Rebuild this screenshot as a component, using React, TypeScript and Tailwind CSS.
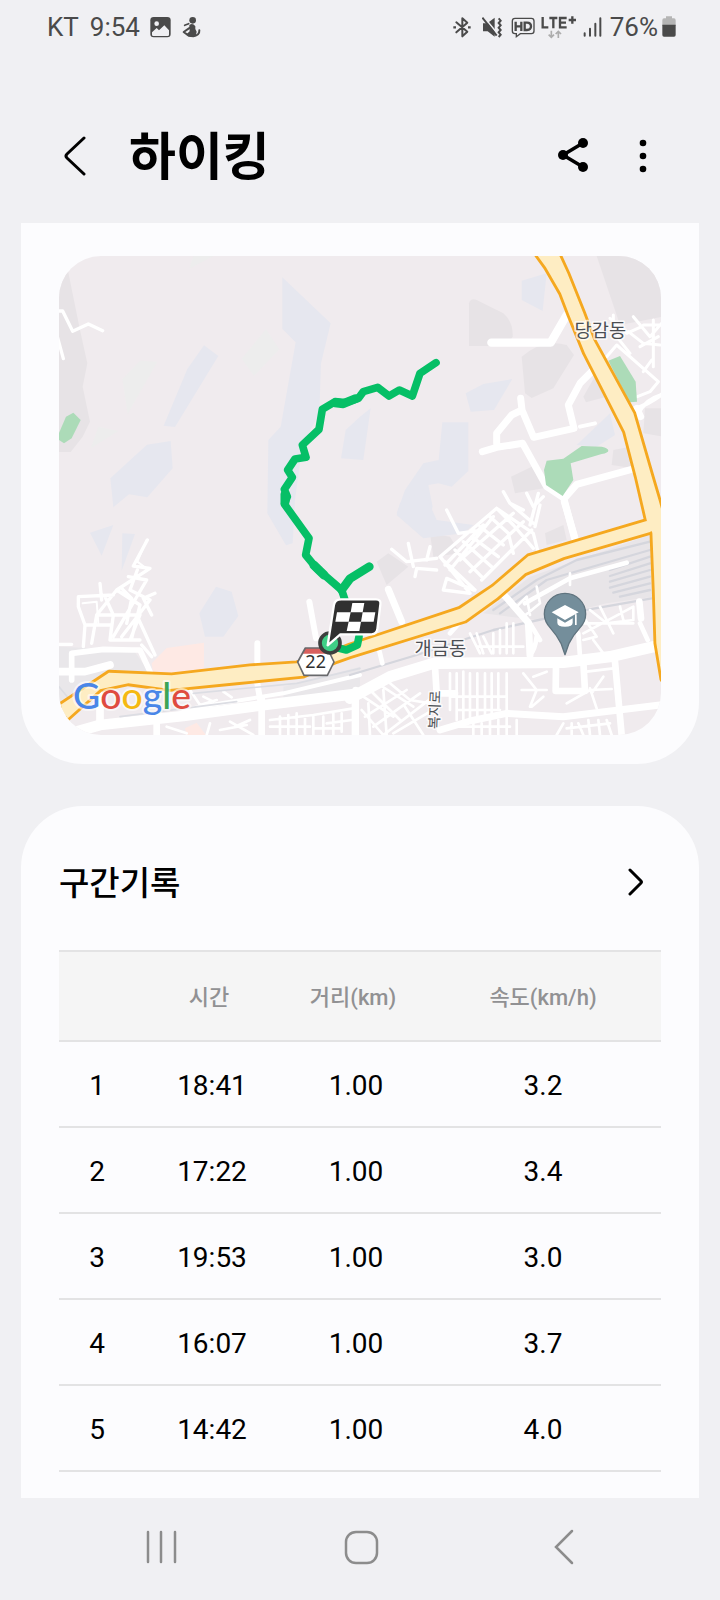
import React from 'react';

const SECTIONS = [
  { lap: 1, time: '18:41', distance: '1.00', speed: '3.2' },
  { lap: 2, time: '17:22', distance: '1.00', speed: '3.4' },
  { lap: 3, time: '19:53', distance: '1.00', speed: '3.0' },
  { lap: 4, time: '16:07', distance: '1.00', speed: '3.7' },
  { lap: 5, time: '14:42', distance: '1.00', speed: '4.0' },
];

const HIGHWAY_22 =
  'M-27 1375L3 1348L150 1250L338 1258L573 1231L713 1222L793 1200L873 1168L1203 1058L1303 991L1408 901L1538 862L1763 795L1790 815L1773 828L1513 904L1398 952L1313 1026L1218 1094L873 1201L833 1215L733 1259L533 1279L333 1299L208 1282L123 1300L28 1385L-27 1434Z';
const HIGHWAY_EAST =
  'M1422 -20L1461 34L1506 112L1531 177L1578 292L1698 527L1733 662L1765 800L1780 830L1787 1002L1792 1162L1810 1270L1840 1270L1840 777L1808 765L1798 730L1778 662L1723 472L1603 252L1573 172L1525 52L1492 -20Z';
const ROUTE =
  'M1131 320L1083 352L1060 420L1021 402L990 420L956 394L913 407L898 427L858 440L828 437L790 460L780 520L730 567L741 604L708 609L686 642L700 664L676 700L685 722L676 744L750 847L740 897L773 937L848 1002L863 1047';

function StatusBar() {
  return (
    <div className="flex h-[54px] items-center justify-between pl-[47px] pr-11 text-[26px] leading-8 text-[#4a4a4a]">
      <div className="flex items-center">
        <span>KT</span>
        <span className="ml-[11px]">9:54</span>
        <svg className="ml-[10px] h-[21px] w-[21px]" viewBox="0 0 63 63">
          <rect x="1" y="0" width="61" height="61" rx="10" fill="#4a4a4a" />
          <circle cx="20" cy="20" r="7" fill="#f0f0f3" />
          <path d="M6 46L20 33L27 40L43 25L57 40V53Q57 57 53 57H10Q6 57 6 53Z" fill="#f0f0f3" />
        </svg>
        <svg className="ml-[11px] h-[21px] w-[19px]" viewBox="0 0 57 63" fill="none" stroke="#4a4a4a">
          <circle cx="32" cy="10" r="10" fill="#4a4a4a" stroke="none" />
          <path d="M22 24Q32 16 40 28Q38 36 44 44L41 58Q24 62 12 53L23 43Z" fill="#4a4a4a" stroke="none" />
          <path d="M20 20L8 25" strokeWidth="5" strokeLinecap="round" />
          <path d="M24 32L5 45L20 56L34 58Q53 54 52 40" strokeWidth="6" strokeLinecap="round" strokeLinejoin="round" />
        </svg>
      </div>
      <div className="flex items-center">
        <svg className="h-[21px] w-[18px]" viewBox="0 0 54 63" fill="none" stroke="#4a4a4a" strokeWidth="6">
          <path d="M10 16L43 44L28 58V4L43 17L10 46" strokeLinejoin="round" strokeLinecap="round" />
          <path d="M1 31H9M45 31H53" strokeWidth="7" />
        </svg>
        <svg className="ml-[11px] h-[21px] w-5" viewBox="0 0 60 63" fill="none" stroke="#4a4a4a">
          <path d="M3 19H16L38 2V59L17 43H3Z" fill="#4a4a4a" stroke="none" />
          <path d="M4 -2L48 52" stroke="#f0f0f3" strokeWidth="5" />
          <path d="M1 2L44 56" strokeWidth="6" />
          <path d="M50 4L56 11L50 18L56 25L50 32L56 39L50 46L56 53L50 60" strokeWidth="6" />
        </svg>
        <svg className="ml-[9px] h-[21px] w-6" viewBox="0 0 72 63" fill="none" stroke="#4a4a4a" strokeWidth="4">
          <path d="M12 4H61Q69 4 69 12V42Q69 50 61 50H28L16 59V50H12Q4 50 4 42V12Q4 4 12 4Z" />
          <path d="M14 14V42M31 14V42M14 28H31M41 17V39H48Q60 39 60 28Q60 17 48 17Z" strokeWidth="7" />
        </svg>
        <svg className="ml-[6px] h-6 w-9" viewBox="0 0 108 72" fill="none" stroke="#4a4a4a" strokeWidth="7">
          <path d="M5 6V37H22M25 9H49M37 9V40M77 9H57V37H77M57 23H75M83 15H105M94 4V26" />
          <path d="M31 47V67M23 59L31 67L39 59M52 69V49M44 57L52 49L60 57" stroke="#adadad" strokeWidth="5" />
        </svg>
        <svg className="ml-[6px] h-[21px] w-[19px]" viewBox="0 0 57 63" stroke="#4a4a4a" strokeWidth="6" strokeLinecap="round">
          <path d="M5 49V56M21 35V56M37 20V56M52 4V56" />
        </svg>
        <span className="ml-2">76%</span>
        <svg className="ml-1 h-[22px] w-[14px]" viewBox="0 0 42 66">
          <path d="M12 1H30V7H36Q41 7 41 13V30H1V13Q1 7 6 7H12Z" fill="#b5b5b5" />
          <path d="M1 26H41V57Q41 62 36 62H6Q1 62 1 57Z" fill="#4a4a4a" />
        </svg>
      </div>
    </div>
  );
}

function Header() {
  return (
    <header className="flex items-center pb-[26px] pl-[55px] pr-[57px] pt-[60px]">
      <button type="button" aria-label="뒤로" className="flex h-12 w-10 items-center justify-center">
        <svg className="h-10 w-6" viewBox="0 0 24 40" fill="none" stroke="#000" strokeWidth="3" strokeLinecap="round" strokeLinejoin="round">
          <path d="M21 2L4 18Q2 20 4 22L21 38" />
        </svg>
      </button>
      <h1 className="ml-[34px] flex-1 pt-1 text-[51px] font-bold leading-[79px] text-black">하이킹</h1>
      <button type="button" aria-label="공유" className="flex h-12 w-12 items-center justify-center">
        <svg className="h-9 w-8" viewBox="0 0 32 36">
          <path d="M26 5L6 17L26 29" fill="none" stroke="#000" strokeWidth="3.5" />
          <circle cx="26" cy="5" r="5" />
          <circle cx="6" cy="17" r="5" />
          <circle cx="26" cy="29" r="5" />
        </svg>
      </button>
      <button type="button" aria-label="더보기" className="ml-[26px] flex h-12 w-10 items-center justify-center">
        <svg className="h-9 w-2" viewBox="0 0 8 36">
          <circle cx="4" cy="5" r="3.3" />
          <circle cx="4" cy="18" r="3.3" />
          <circle cx="4" cy="31" r="3.3" />
        </svg>
      </button>
    </header>
  );
}

function RouteMap() {
  return (
    <svg
      className="block w-full rounded-[42px]"
      viewBox="0 0 1806 1437"
      fill="none"
      strokeLinecap="round"
      strokeLinejoin="round"
      role="img"
      aria-label="하이킹 경로"
    >
      <rect width="1806" height="1437" fill="#f0ebee" />

      {/* north west: terrain */}
      <g transform="translate(-27 -18)">
        <path d="M27 18H45L90 240L112 340L98 410L120 515L98 560L62 606H20Z" fill="#e7e3e6" />
        <g fill="#e6e7ef">
          <path d="M697 82L842 220L813 340L808 490L757 585L735 750L728 880L708 886L652 790L655 570L692 530L737 277L697 237Z" />
          <path d="M462 286L505 318L375 531L341 527L412 357Z" />
          <path d="M362 573L368 655L292 742L237 733L190 772L181 685L291 584Z" />
          <path d="M962 475L940 630L873 625L887 540L930 500Z" />
        </g>
        <g fill="#ededed">
          <path d="M270 332L322 335L233 492L217 388Z" />
          <path d="M648 237L688 298L612 378L575 326Z" />
          <path d="M145 530L205 543L122 595Z" />
          <path d="M430 18H490L418 56Z" />
        </g>
        <path d="M48 500L70 488L92 510L65 565L42 580L20 565Z" fill="#acdbb8" />
        <path d="M20 183H38L68 244L115 222L158 242M22 260L40 326" stroke="#fff" strokeWidth="10" />
      </g>

      {/* north east: terrain, parks and roads */}
      <g transform="translate(873 -18)">
        <g fill="#e7e3e6">
          <path d="M740 18H940V200L810 225Z" />
          <path d="M357 160Q362 143 380 150L460 190Q490 215 488 260L470 288H357Z" />
          <path d="M515 320Q580 265 650 285L672 315L610 415L545 444L525 430Z" />
          <path d="M700 440L740 370L770 440L708 457ZM790 600L840 590L850 655L785 645ZM483 680L545 650L580 715L495 730ZM885 475H940V560L880 550Z" />
        </g>
        <g fill="#e6e7ef">
          <path d="M515 92L590 70L578 183L515 150Z" />
          <path d="M347 430L400 402L487 387L432 480L362 485Z" />
          <path d="M277 517H355V663L305 710L265 700L235 705L248 770L220 850L140 790L165 720L220 640L266 630Z" />
          <path d="M680 585L780 490L795 555L740 590Z" />
        </g>
        <g stroke="#fff">
          <path d="M424 278H602L650 195" strokeWidth="25" />
          <path d="M512 445L516 480L551 562L672 535L655 465L690 400L735 355M516 480L485 495L440 550V580M397 605L440 592L518 580L590 710L643 745L680 703L845 658M872 500L860 475M640 740L675 870" strokeWidth="21" />
          <path d="M690 530L735 520M860 475Q900 460 940 430M865 490Q885 450 935 435" strokeWidth="12" />
          <path d="M770 320L800 285L925 395L900 425L862 440M835 245L880 280L930 285M780 205L830 250L875 230M850 200L900 260L935 220M910 210V350M880 225H935M870 290L925 260M790 195V235M905 330L880 365M800 260L840 310" strokeWidth="9" />
        </g>
        <g fill="#acdbb8">
          <path d="M775 332L810 318L857 395L861 455L838 457Z" />
          <path d="M590 632L640 626L695 588L755 590Q775 594 775 602Q775 608 755 612L662 640L670 690L638 738L588 705L582 660Z" />
        </g>
      </g>

      {/* south west: streets */}
      <g transform="translate(-27 702)">
        <path d="M120 128L190 105L155 197ZM217 130L255 132L215 242ZM498 290L545 305L565 378L520 440H465L448 370Z" fill="#e6e7ef" />
        <path d="M305 520L350 474L462 458V550L310 555ZM405 715L440 698L468 735H410Z" fill="#fee9e4" />
        <path d="M27 470L250 480L300 550L27 640ZM700 590L930 530V620L700 650Z" fill="#e9e7ea" />
        <g stroke="#fff" strokeWidth="10">
          <path d="M292 150L250 228L300 235L200 300L140 375H260L315 495M150 280L155 330M85 350V320L190 315M85 350L105 405L100 470M105 405H185L180 450H270M235 260L290 270L190 440M262 240L240 300L300 330L215 440M315 310L280 325L305 375M200 300L270 345L245 445M165 320L190 375L180 450M140 375L125 460M270 375L240 450M27 463H65M275 465L305 500M215 295L245 325L230 400" />
          <path d="M290 150L262 215L295 240M98 340L140 335L145 400" strokeWidth="6" />
        </g>
        <g stroke="#fff">
          <path d="M65 570V490L160 478L245 480L270 480L300 545" strokeWidth="17" />
          <path d="M20 545H105L180 525M150 700V650L145 600" strokeWidth="23" />
          <path d="M622 460V540M778 335L798 445M622 580L632 640" strokeWidth="18" />
          <path d="M27 740L150 705L400 678L650 644L930 610" strokeWidth="32" />
          <path d="M635 625V735M917 600V735M320 690V740" strokeWidth="20" />
          <path d="M400 660L500 642L700 610L930 555" strokeWidth="12" />
          <path d="M420 600L450 645L500 630M520 605L545 622M460 620L490 635M350 710L410 730M480 700L470 735M540 695L610 735M555 710L600 690M660 690L790 675L910 655M660 710H780M690 680V735M715 675V735M740 670V735M765 680V735M790 675V735M820 680V735M850 670V735M830 700L905 690M875 670V725M790 715H870M510 720L590 705" strokeWidth="8" />
        </g>
        <path d="M27 590L60 630L130 650M210 680L560 635M430 610L740 580L930 535" stroke="#dcdde3" strokeWidth="5" />
      </g>

      {/* south east: railway and streets */}
      <g transform="translate(873 702)">
        <path d="M540 260L900 135L910 320L770 340L560 390L400 370Z" fill="#e8e5e8" />
        <path d="M80 215L115 190L175 230L110 285ZM585 130L640 105L650 150L590 165ZM240 130L300 140L330 190L250 200Z" fill="#e7e3e6" />
        <path d="M150 40L220 0L260 90L370 105L340 130L220 145L140 75Z" fill="#e6e7ef" />
        <g stroke="#d5d6dd" strokeWidth="7">
          <path d="M0 555L200 495L430 420L680 365L905 325M430 360L560 270L680 210L900 155M450 370L590 270L900 180M780 240L900 200M780 258L900 220M780 275L900 240M780 293L900 260M790 308L900 280M810 320L900 300" />
        </g>
        <g stroke="#fff">
          <path d="M115 298L155 395M465 318L535 398L540 495M643 35L675 145" strokeWidth="21" />
          <path d="M0 625L120 560L250 520L640 517L780 500L910 470" strokeWidth="34" />
          <path d="M15 620V735M255 530L260 610H315M618 530L617 603H705L700 515M795 515L815 735M868 335L873 385" strokeWidth="20" />
          <path d="M270 720L360 693L470 670L640 680L930 645" strokeWidth="21" />
          <path d="M560 440Q555 480 540 495M540 400L570 450M685 430L690 500M870 400L893 450M300 430L340 385M85 470L97 520M830 218L660 265L525 340" strokeWidth="14" />
          <path d="M270 200L440 55L550 130L565 190M290 60L325 130L400 120M270 200L360 310L280 300L290 265L370 300M125 178L170 215L260 205M175 160L190 230M240 170L230 210M195 260L200 235L260 240M460 5L480 40L550 100M530 10L550 50L580 20M480 40L520 60M490 70L330 210M520 95L360 245M545 120L395 270M440 55L490 105L550 175M420 80L475 130L490 190M390 110L460 165M365 140L445 200M340 155L430 235M315 180L400 265M285 215L375 300M400 105L285 225M430 80L300 240M565 10L540 105M570 45L555 110" strokeWidth="10" />
          <path d="M300 550V660M320 550V690M340 545V690M360 550V690M382 550V690M405 550V680M425 550V670M445 550V660M470 550V735M300 620H470M320 660H450M360 430L390 490M380 430L400 490M400 440L425 490M430 430V490M450 420V490M470 400V490M490 400V490M380 470H520M40 620L130 680M60 600L150 690M90 585L190 650M120 580L180 630L240 640M45 680L170 600M70 710L210 610M100 735L250 620M130 730L240 665M55 640L60 735M100 600L110 735M165 650L220 735M35 660L100 735M520 550L560 600L540 650M515 600H590M550 560L590 545M545 650L580 620M650 640L720 600L785 597M710 545L790 535M720 595L740 655M725 610L760 560M500 350L530 320L540 375M560 290L570 340L520 380M660 250V285M700 380L740 440L700 450M720 360L770 400M750 350L790 430M700 430L850 350L850 390L770 400M810 350L820 390M700 400H850M730 450L760 490M370 700V735M395 700V735M420 690V735M445 690V735M500 690V735M640 700L620 735M665 700V735M685 700L700 735M715 690L720 735M745 690L750 735M770 690L785 735M320 710H480M650 715L780 700" strokeWidth="8" />
        </g>
      </g>

      {/* highways */}
      <g stroke="#f5a81f" strokeWidth="17">
        <path d={HIGHWAY_22} />
        <path d={HIGHWAY_EAST} />
      </g>
      <g fill="#feedc3">
        <path d={HIGHWAY_22} />
        <path d={HIGHWAY_EAST} />
      </g>

      {/* route 22 shield */}
      <g transform="translate(-27 702)">
        <path d="M766 474H832L852 516L832 556H762L743 516Z" fill="#fff" />
        <path d="M766 474H832L840 491H758Z" fill="#d9605e" />
        <path d="M766 474H832L852 516L832 556H762L743 516Z" stroke="#68696c" strokeWidth="5" />
        <text x="797" y="535" textAnchor="middle" className="fill-[#303030] font-['Noto_Sans'] text-[54px]">22</text>
      </g>

      {/* tracked route */}
      <g stroke="#06bf66" strokeWidth="23">
        <path d={ROUTE} />
        <path d="M828 440L853 443L890 428M678 715V738M765 928L795 957" strokeWidth="27" />
        <path d="M848 1002L873 968L931 932" strokeWidth="26" />
        <path d="M838 1176L862 1182L895 1167L900 1142" />
      </g>

      {/* start point and finish flag */}
      <g transform="translate(-27 702)">
        <circle cx="840" cy="459" r="30" fill="#3fcf86" stroke="#3c3f3e" strokeWidth="11" />
        <path d="M874 328H978Q994 328 991 344L982 418Q979 433 965 433H871L833 466L852 344Q855 328 874 328Z" fill="#303030" stroke="#fff" strokeWidth="7" />
        <path d="M907 339H943L938 367H902ZM861 367H902L896 395H856ZM938 367H976L971 395H933ZM896 395H933L928 423H890Z" fill="#fff" />
      </g>

      {/* university pin */}
      <g transform="translate(873 702)">
        <path d="M645 494L633 460Q620 435 602 415Q583 395 583 372A62 62 0 0 1 707 372Q707 395 690 413Q670 435 657 460Z" fill="#748e9b" stroke="#60747f" strokeWidth="4" />
        <path d="M605 367L645 345L686 367L645 390ZM622 385L645 398L668 385V398Q668 410 645 410Q622 410 622 398ZM675 373H680V405H675Z" fill="#fff" />
      </g>

      <g className="fill-[#4b4f54] stroke-white/70 font-['Noto_Sans_CJK_KR'] text-[56px] [paint-order:stroke]" strokeWidth="10">
        <text x="1624" y="243" textAnchor="middle">당감동</text>
        <text x="1144" y="1198" textAnchor="middle">개금동</text>
        <text transform="translate(1140 1420) rotate(-88)" className="text-[42px]">복지로</text>
      </g>

      <text x="42" y="1359" strokeWidth="12" className="stroke-white/60 font-['Lato'] text-[112px] font-medium [paint-order:stroke]">
        <tspan fill="#4a86e8">G</tspan>
        <tspan fill="#df4b40">o</tspan>
        <tspan fill="#f5b912">o</tspan>
        <tspan fill="#4a86e8">g</tspan>
        <tspan fill="#3da455">l</tspan>
        <tspan fill="#df4b40">e</tspan>
      </text>
    </svg>
  );
}

function SectionRecords() {
  return (
    <section className="mt-[42px] flex-1 rounded-t-[62px] bg-[#fcfcfe] px-[38px] pb-[26px] pt-[52px]">
      <div className="mb-[44px] flex h-12 items-center justify-between pr-[11px]">
        <h2 className="pt-1 text-[33px] font-medium leading-12 text-black">구간기록</h2>
        <button type="button" aria-label="구간기록 상세 보기" className="flex h-10 w-7 items-center justify-center">
          <svg className="h-7 w-4" viewBox="0 0 16 28" fill="none" stroke="#000" strokeWidth="3" strokeLinecap="round" strokeLinejoin="round">
            <path d="M2 2L13 13Q14 14 13 15L2 26" />
          </svg>
        </button>
      </div>
      <table className="w-full table-fixed border-collapse text-center">
        <colgroup>
          <col className="w-[76px]" />
          <col className="w-[152px]" />
          <col className="w-[136px]" />
          <col />
        </colgroup>
        <thead>
          <tr className="h-[90px] border-y-2 border-[#e3e3e4] bg-[#f5f5f5] text-[22px] text-[#919193]">
            <th aria-label="구간" />
            <th className="pr-1 pt-[2px] font-medium">시간</th>
            <th className="pr-1 pt-[2px] font-medium">거리(km)</th>
            <th className="pl-[2px] pt-[2px] font-medium">속도(km/h)</th>
          </tr>
        </thead>
        <tbody>
          {SECTIONS.map((section) => (
            <tr key={section.lap} className="h-[86px] border-b-2 border-[#e3e3e4] text-[28px] text-black">
              <td className="pt-1">{section.lap}</td>
              <td className="pl-[2px] pt-1">{section.time}</td>
              <td className="pl-[2px] pt-1">{section.distance}</td>
              <td className="pl-[2px] pt-1">{section.speed}</td>
            </tr>
          ))}
        </tbody>
      </table>
    </section>
  );
}

function NavigationBar() {
  return (
    <nav className="grid h-[102px] grid-cols-3 items-center pb-1 pl-[62px] pr-[58px]">
      <button type="button" aria-label="최근 앱" className="flex h-12 items-center justify-center">
        <svg className="h-9 w-9" viewBox="0 0 36 36" stroke="#8c8c8c" strokeWidth="2.5" strokeLinecap="round">
          <path d="M4 3V33M17 3V33M31 3V33" />
        </svg>
      </button>
      <button type="button" aria-label="홈" className="flex h-12 items-center justify-center">
        <svg className="h-9 w-9" viewBox="0 0 36 36" fill="none" stroke="#8c8c8c" strokeWidth="2.5">
          <rect x="2" y="3" width="31" height="31" rx="10" />
        </svg>
      </button>
      <button type="button" aria-label="뒤로 가기" className="flex h-12 items-center justify-center">
        <svg className="h-9 w-9" viewBox="0 0 36 36" fill="none" stroke="#8c8c8c" strokeWidth="2.5" strokeLinecap="round">
          <path d="M28 2L12 18L28 34" />
        </svg>
      </button>
    </nav>
  );
}

export default function App() {
  return (
    <div className="flex min-h-screen flex-col bg-[#f0f0f3] font-['Roboto','Noto_Sans_CJK_KR',sans-serif]">
      <StatusBar />
      <Header />
      <main className="mx-[21px] flex flex-1 flex-col">
        <section className="rounded-b-[62px] bg-[#fcfcfe] px-[38px] pb-[29px] pt-[33px]">
          <RouteMap />
        </section>
        <SectionRecords />
      </main>
      <NavigationBar />
    </div>
  );
}
